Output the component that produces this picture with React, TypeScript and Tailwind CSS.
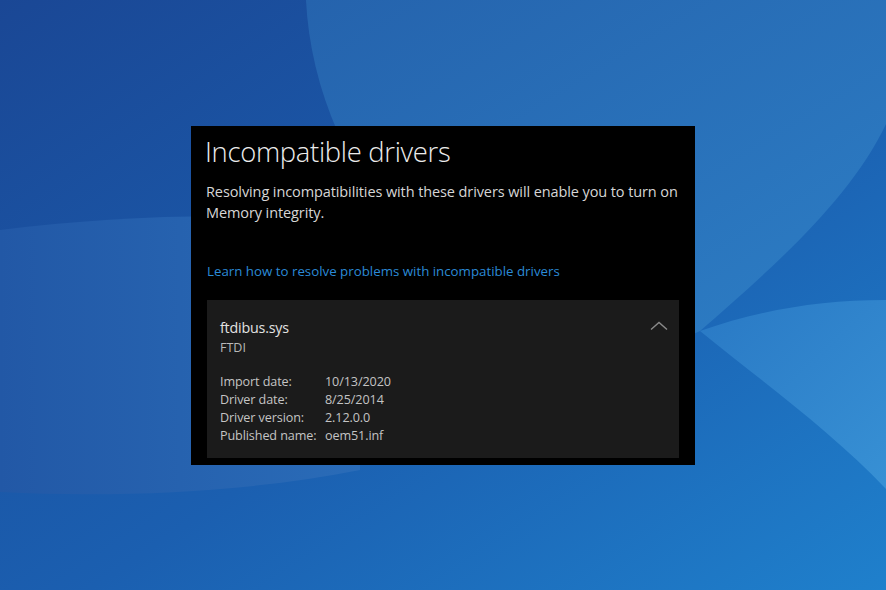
import React from "react";

function Wallpaper() {
  return (
    <svg className="absolute inset-0" width="886" height="590" viewBox="0 0 886 590" preserveAspectRatio="none">
      <defs>
        <linearGradient id="base" x1="0" y1="0" x2="1" y2="1">
          <stop offset="0" stopColor="#1a4795" />
          <stop offset="0.55" stopColor="#1b5fb0" />
          <stop offset="1" stopColor="#1f80cc" />
        </linearGradient>
        <linearGradient id="arc" x1="0" y1="0" x2="1" y2="1">
          <stop offset="0" stopColor="#2563ad" />
          <stop offset="1" stopColor="#2d7fc6" />
        </linearGradient>
        <linearGradient id="band" x1="0" y1="0" x2="1" y2="0">
          <stop offset="0" stopColor="#2258a6" />
          <stop offset="1" stopColor="#2a6cb8" />
        </linearGradient>
        <linearGradient id="sweep" x1="0" y1="0" x2="1" y2="1">
          <stop offset="0" stopColor="#2b7bc6" />
          <stop offset="1" stopColor="#3a93d6" />
        </linearGradient>
      </defs>
      <rect width="886" height="590" fill="url(#base)" />
      <path d="M306 0 C312 120 380 250 520 330 C600 370 660 350 700 331 C770 270 850 200 886 124 L886 0 Z" fill="url(#arc)" />
      <path d="M0 230 C120 215 240 212 360 222 L360 470 C250 492 120 498 0 492 Z" fill="url(#band)" />
      <path d="M700 331 C760 380 830 430 886 489 L886 300 C820 300 760 310 700 331 Z" fill="url(#sweep)" opacity="0.9" />
    </svg>
  );
}

export default function App() {
  const rows: [string, string][] = [
    ["Import date:", "10/13/2020"],
    ["Driver date:", "8/25/2014"],
    ["Driver version:", "2.12.0.0"],
    ["Published name:", "oem51.inf"],
  ];
  return (
    <div
      className="relative w-[886px] h-[590px] overflow-hidden flex items-center justify-center"
      style={{ fontFamily: '"Open Sans", "Noto Sans", sans-serif' }}
    >
      <Wallpaper />
      <div className="relative w-[504px] h-[339px] bg-black px-4 pt-[8px] overflow-hidden">
        <div className="text-[27.4px] leading-[36px] font-light text-[#ececec] -ml-[2px] tracking-[-0.3px]">
          Incompatible drivers
        </div>
        <div className="mt-[11px] text-[14.5px] leading-[21px] text-[#d6d6d6] -ml-[1px] tracking-[-0.1px] whitespace-nowrap">
          <div>Resolving incompatibilities with these drivers will enable you to turn on</div>
          <div>Memory integrity.</div>
        </div>
        <div className="mt-[39px] text-[13.3px] leading-[18px] text-[#2b8ad6] whitespace-nowrap">
          Learn how to resolve problems with incompatible drivers
        </div>
        <div className="mt-[20px] bg-[#1b1b1b] h-[158px] pl-[13px] pr-[11px] pt-[18px] relative">
          <div className="flex items-start justify-between">
            <div>
              <div className="text-[14.3px] leading-[20px] text-[#e2e2e2] tracking-[-0.2px]">ftdibus.sys</div>
              <div className="text-[12.5px] leading-[19px] text-[#b8b8b8]">FTDI</div>
            </div>
            <svg width="18" height="10" viewBox="0 0 18 10" className="mt-[3px]">
              <path d="M1 8.5 L9 1.5 L17 8.5" fill="none" stroke="#8a8a8a" strokeWidth="1.4" />
            </svg>
          </div>
          <div className="mt-[16px] grid grid-cols-[105px_1fr] text-[12.6px] leading-[18px] text-[#c4c4c4] tracking-[-0.1px]">
            {rows.map(([k, v]) => (
              <React.Fragment key={k}>
                <div>{k}</div>
                <div>{v}</div>
              </React.Fragment>
            ))}
          </div>
        </div>
      </div>
    </div>
  );
}
